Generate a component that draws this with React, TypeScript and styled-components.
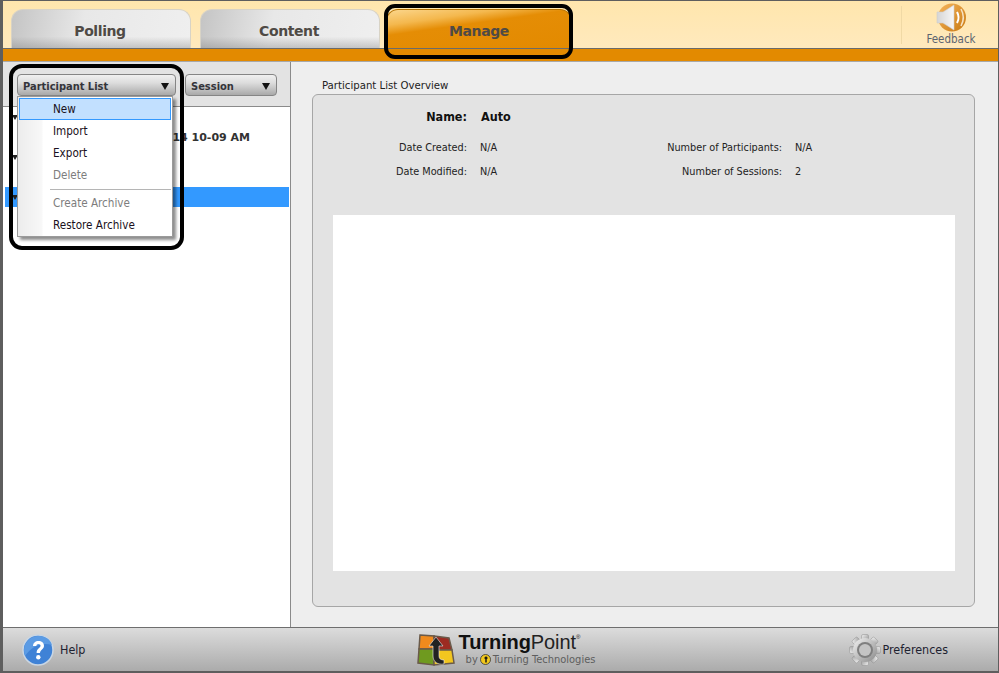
import React from 'react';
import styled, { createGlobalStyle } from 'styled-components';

const uiFont = `"DejaVu Sans Condensed", "Noto Sans", sans-serif`;

const GlobalStyle = createGlobalStyle`
  html, body {
    margin: 0;
    padding: 0;
    background: #fff;
  }
  body {
    font-family: ${uiFont};
    font-size: 11px;
    color: #1c1c1c;
  }
`;

const Window = styled.div`
  width: 999px;
  height: 673px;
  box-sizing: border-box;
  border: 1px solid #5e5e5e;
  border-width: 1px 1px 2px 3px;
  display: flex;
  flex-direction: column;
  overflow: hidden;
  position: relative;
`;

const Header = styled.header`
  height: 47px;
  flex: none;
  display: flex;
  align-items: flex-end;
  padding-left: 8px;
  background: linear-gradient(#ffe6ad, #ffe9bd);
  border-bottom: 1px solid #6b6b6b;
`;

const Tab = styled.div<{ $active?: boolean; $gap?: number }>`
  position: relative;
  width: ${p => (p.$active ? 186 : 180)}px;
  height: 39px;
  box-sizing: border-box;
  margin-right: ${p => p.$gap ?? 9}px;
  padding: 4px ${p => (p.$active ? 0 : 2)}px 0 0;
  display: flex;
  align-items: center;
  justify-content: center;
  border-radius: 12px 12px 0 0;
  border: 1px solid ${p => (p.$active ? '#b36f00' : '#d8d3c6')};
  border-bottom: 0;
  font-family: "DejaVu Sans", sans-serif;
  font-weight: 700;
  font-size: 14px;
  letter-spacing: -0.4px;
  color: #4f4a45;
  background: ${p =>
    p.$active
      ? 'linear-gradient(172deg, #fbd68c 0%, #f4b84e 24%, #e58d05 40%, #e38a00 100%)'
      : 'linear-gradient(180deg, transparent 70%, rgba(120,120,120,0.35) 100%), linear-gradient(100deg, #c4c4c4 0%, #e8e8e8 40%, #efefef 100%)'};
`;

const Callout = styled.div<{ $radius: number; $inset: string }>`
  position: absolute;
  inset: ${p => p.$inset};
  border: 4px solid #000;
  border-radius: ${p => p.$radius}px;
  pointer-events: none;
  z-index: 5;
`;

const FeedbackButton = styled.div`
  margin-left: auto;
  margin-right: 1px;
  margin-bottom: 4px;
  width: 96px;
  height: 38px;
  padding-left: 3px;
  box-sizing: border-box;
  border-left: 1px solid #f0d9a5;
  display: flex;
  flex-direction: column;
  align-items: center;
  color: #5c6470;
  font-size: 11.5px;
  line-height: 13px;

  svg {
    flex: none;
    margin-top: -3px;
    margin-bottom: 1px;
  }
`;

const OrangeBar = styled.div`
  height: 13px;
  flex: none;
  background: #e38a00;
  border-bottom: 1px solid #a8a8a8;
  box-sizing: border-box;
`;

const Main = styled.main`
  flex: 1;
  display: flex;
  min-height: 0;
`;

const LeftPane = styled.aside`
  width: 287px;
  flex: none;
  display: flex;
  flex-direction: column;
  border-right: 1px solid #8a8a8a;
  background: #fff;
`;

const Toolbar = styled.div`
  height: 45px;
  flex: none;
  box-sizing: border-box;
  padding: 12px 0 0 14px;
  display: flex;
  gap: 9px;
  align-items: flex-start;
  background: #e3e3e3;
  border-bottom: 1px solid #8a8a8a;
`;

const DropdownWrap = styled.div`
  position: relative;
`;

const DropdownButton = styled.div<{ $width: number }>`
  width: ${p => p.$width}px;
  height: 22px;
  box-sizing: border-box;
  padding: 2px 5px 0;
  display: flex;
  align-items: center;
  justify-content: space-between;
  border: 1px solid #858585;
  border-radius: 4px;
  background: linear-gradient(#f0f0f0, #dcdcdc 40%, #a9a9a9);
  font-family: ${uiFont};
  font-weight: 700;
  font-size: 11px;
  color: #34343a;
`;

const Caret = styled.span`
  width: 0;
  height: 0;
  border-left: 4px solid transparent;
  border-right: 4px solid transparent;
  border-top: 7px solid #111;
  margin-right: 1px;
`;

const Menu = styled.div`
  position: absolute;
  top: 22px;
  left: 0;
  width: 156px;
  height: 141px;
  box-sizing: border-box;
  padding: 1px;
  z-index: 4;
  background: linear-gradient(90deg, #ececec 0, #f8f8f8 24px, #fff 25px);
  border: 1px solid #9a9a9a;
  box-shadow: 3px 3px 3px rgba(0, 0, 0, 0.45);
`;

const MenuItem = styled.div<{ $highlight?: boolean; $disabled?: boolean }>`
  height: 22px;
  box-sizing: border-box;
  padding: 0 0 0 33px;
  display: flex;
  align-items: center;
  font-size: 11.6px;
  color: ${p => (p.$disabled ? '#7d7d7d' : '#1a1020')};
  background: ${p => (p.$highlight ? '#c2e0ff' : 'transparent')};
  border: 1px solid ${p => (p.$highlight ? '#3399ff' : 'transparent')};
`;

const MenuDivider = styled.div`
  height: 1px;
  margin: 3px 0 2px 31px;
  background: #b5b5b5;
`;

const TreeList = styled.div`
  flex: 1;
  padding: 0 1px 0 2px;
`;

const TreeRow = styled.div<{ $selected?: boolean }>`
  height: 20px;
  display: flex;
  align-items: center;
  padding-left: 7px;
  background: ${p => (p.$selected ? '#3399ff' : 'transparent')};
`;

const TreeArrow = styled.span`
  width: 0;
  height: 0;
  border-left: 3px solid transparent;
  border-right: 3px solid transparent;
  border-top: 5px solid #222;
`;

const TreeText = styled.span`
  margin-left: auto;
  margin-right: 39px;
  font-family: "DejaVu Sans", sans-serif;
  font-weight: 700;
  font-size: 11px;
  color: #333;
  white-space: nowrap;
`;

const RightPane = styled.section`
  flex: 1;
  background: #eeeeee;
  padding: 15px 23px 20px 21px;
  display: flex;
  flex-direction: column;
`;

const PaneTitle = styled.div`
  height: 17px;
  line-height: 18px;
  padding-left: 10px;
  font-size: 11.3px;
  color: #222;
`;

const GroupBox = styled.div`
  flex: 1;
  box-sizing: border-box;
  border: 1px solid #a6a6a6;
  border-radius: 6px;
  background: #e3e3e3;
  padding: 11px 19px 35px 20px;
  display: flex;
  flex-direction: column;
`;

const Details = styled.div`
  height: 109px;
  flex: none;
  display: grid;
  grid-template-columns: 134px 185px 130px 1fr;
  grid-template-rows: 29px 24px 24px;
  align-content: start;
  align-items: center;
`;

const NameLabel = styled.div`
  align-self: start;
  line-height: 21px;
  text-align: right;
  font-family: ${uiFont};
  font-weight: 700;
  font-size: 12.5px;
  color: #111;
`;

const NameValue = styled.div`
  align-self: start;
  line-height: 21px;
  padding-left: 14px;
  grid-column: 2 / 5;
  font-family: ${uiFont};
  font-weight: 700;
  font-size: 12.5px;
  color: #111;
`;

const InfoLabel = styled.div`
  text-align: right;
  white-space: nowrap;
  font-size: 10.8px;
  color: #222;
`;

const InfoValue = styled.div`
  padding-left: 13px;
  font-size: 10.8px;
  color: #222;
`;

const WhiteArea = styled.div`
  flex: 1;
  background: #fff;
`;

const Footer = styled.footer`
  height: 44px;
  flex: none;
  box-sizing: border-box;
  border-top: 1px solid #6e6e6e;
  display: grid;
  grid-template-columns: 1fr auto 1fr;
  align-items: center;
  padding: 0 50px 0 19px;
  background: linear-gradient(#dcdcdc, #ababab);
`;

const FooterItem = styled.div<{ $end?: boolean; $gap: number }>`
  display: flex;
  align-items: center;
  gap: ${p => p.$gap}px;
  font-size: 12.4px;
  color: #1e2230;
  justify-content: ${p => (p.$end ? 'flex-end' : 'flex-start')};
`;

const Brand = styled.div`
  display: flex;
  align-items: center;
  gap: 4px;
  padding-left: 42px;
`;

const BrandText = styled.div`
  display: flex;
  flex-direction: column;
  padding-bottom: 3px;
`;

const BrandName = styled.div`
  font-family: "Liberation Sans", sans-serif;
  font-size: 20px;
  line-height: 23px;
  height: 23px;
  color: #111;
  font-weight: 700;
  letter-spacing: -0.1px;

  span {
    font-weight: 400;
    color: #222;
  }

  sup {
    font-size: 6px;
    font-weight: 400;
    vertical-align: 10px;
    line-height: 0;
  }
`;

const BrandSub = styled.div`
  display: flex;
  align-items: center;
  gap: 2px;
  padding-left: 7px;
  font-size: 11px;
  line-height: 12px;
  height: 12px;
  color: #5e5e5e;
  white-space: nowrap;
`;

const SpeakerIcon = () => (
  <svg width="31" height="29" viewBox="0 0 31 29">
    <defs>
      <linearGradient id="spk" x1="0" y1="0" x2="1" y2="1">
        <stop offset="0" stopColor="#f6b55c" />
        <stop offset="1" stopColor="#c97a12" />
      </linearGradient>
      <linearGradient id="cone" x1="0" y1="0" x2="1" y2="0">
        <stop offset="0" stopColor="#d5d5d5" />
        <stop offset="1" stopColor="#f7f7f7" />
      </linearGradient>
    </defs>
    <circle cx="16" cy="14.500" r="14" fill="url(#spk)" />
    <path d="M1 9h6L18 2v25L7 20H1z" fill="url(#cone)" stroke="#cfcfcf" strokeWidth="0.600" />
    <path d="M21 9c2 3.500 2 7.500 0 11" fill="none" stroke="#fff" strokeWidth="2" />
    <path d="M25 6c3 5.500 3 11.500 0 17" fill="none" stroke="#f7e3c4" strokeWidth="1.500" />
  </svg>
);

const HelpIcon = () => (
  <svg width="32" height="32" viewBox="0 0 32 32">
    <circle cx="16" cy="16" r="15" fill="#3f82d6" stroke="#c9d6e4" strokeWidth="1.500" />
    <path d="M3 22C10 12 20 8 30 11 28 4 22 2 16 2 8 2 2 9 2 16c0 2 .4 4 1 6z" fill="#5b9be4" />
    <path
      d="M11 12c0-3 2.400-5 5.500-5 3.200 0 5.500 2 5.500 4.700 0 3.600-4 3.800-4 7.300h-3.400c0-4.800 3.900-5 3.900-7.200 0-1-.8-1.800-2-1.800-1.300 0-2.100.8-2.200 2z"
      fill="#fff"
    />
    <circle cx="16.300" cy="23.300" r="2.200" fill="#fff" />
  </svg>
);

const LogoIcon = () => (
  <svg width="38" height="34" viewBox="0 0 38 34">
    <path d="M3 2l14 1v13H2z" fill="#ef8a1d" stroke="#6a5a4a" strokeWidth="1.500" />
    <path d="M17 3l15 2 3 12H17z" fill="#9c2b22" stroke="#6a5a4a" strokeWidth="1.500" />
    <path d="M2 16h15v16L1 30z" fill="#6f9a1f" stroke="#6a5a4a" strokeWidth="1.500" />
    <path d="M17 17h18l2 13-20 2z" fill="#f2c61f" stroke="#6a5a4a" strokeWidth="1.500" />
    <path d="M19 4l7 9h-4v10c0 3 2 4 5 4v4c-6 1-11-2-11-8V13h-4z" fill="#222" stroke="#eee" strokeWidth="0.600" />
  </svg>
);

const TurningMark = () => (
  <svg width="11" height="11" viewBox="0 0 11 11">
    <circle cx="5.500" cy="5.500" r="5" fill="#f2c81c" stroke="#333" strokeWidth="0.800" />
    <path d="M6 2.500v6M4.500 4h3" stroke="#111" strokeWidth="1.400" fill="none" />
  </svg>
);

const GearIcon = () => {
  const teeth = [0, 45, 90, 135, 180, 225, 270, 315];
  return (
    <svg width="32" height="32" viewBox="0 0 32 32">
      <defs>
        <linearGradient id="gear" x1="0" y1="0" x2="1" y2="1">
          <stop offset="0" stopColor="#f2f2f2" />
          <stop offset="1" stopColor="#8a8a8a" />
        </linearGradient>
      </defs>
      {teeth.map(a => (
        <rect key={a} x="12.500" y="0.500" width="7" height="8" rx="1.500" fill="url(#gear)" stroke="#8f8f8f" strokeWidth="0.500" transform={`rotate(${a} 16 16)`} />
      ))}
      <circle cx="16" cy="16" r="12" fill="url(#gear)" />
      <circle cx="16" cy="16" r="8" fill="#7f7f7f" />
      <circle cx="16" cy="16" r="6" fill="#c4c4c4" />
    </svg>
  );
};

const App: React.FC = () => {
  return (
    <>
      <GlobalStyle />
      <Window>
        <Header>
          <Tab>Polling</Tab>
          <Tab $gap={6}>Content</Tab>
          <Tab $active>
            Manage
            <Callout $radius={11} $inset="-6px -2px -11px -3px" />
          </Tab>
          <FeedbackButton>
            <SpeakerIcon />
            <span>Feedback</span>
          </FeedbackButton>
        </Header>
        <OrangeBar />
        <Main>
          <LeftPane>
            <Toolbar>
              <DropdownWrap>
                <DropdownButton $width={159}>
                  Participant List
                  <Caret />
                </DropdownButton>
                <Menu>
                  <MenuItem $highlight>New</MenuItem>
                  <MenuItem>Import</MenuItem>
                  <MenuItem>Export</MenuItem>
                  <MenuItem $disabled>Delete</MenuItem>
                  <MenuDivider />
                  <MenuItem $disabled>Create Archive</MenuItem>
                  <MenuItem>Restore Archive</MenuItem>
                </Menu>
                <Callout $radius={13} $inset="-10px -8px -154px -8px" />
              </DropdownWrap>
              <DropdownButton $width={92}>
                Session
                <Caret />
              </DropdownButton>
            </Toolbar>
            <TreeList>
              <TreeRow>
                <TreeArrow />
              </TreeRow>
              <TreeRow>
                <TreeText>2014 10-09 AM</TreeText>
              </TreeRow>
              <TreeRow>
                <TreeArrow />
              </TreeRow>
              <TreeRow />
              <TreeRow $selected>
                <TreeArrow />
              </TreeRow>
            </TreeList>
          </LeftPane>
          <RightPane>
            <PaneTitle>Participant List Overview</PaneTitle>
            <GroupBox>
              <Details>
                <NameLabel>Name:</NameLabel>
                <NameValue>Auto</NameValue>
                <InfoLabel>Date Created:</InfoLabel>
                <InfoValue>N/A</InfoValue>
                <InfoLabel>Number of Participants:</InfoLabel>
                <InfoValue>N/A</InfoValue>
                <InfoLabel>Date Modified:</InfoLabel>
                <InfoValue>N/A</InfoValue>
                <InfoLabel>Number of Sessions:</InfoLabel>
                <InfoValue>2</InfoValue>
              </Details>
              <WhiteArea />
            </GroupBox>
          </RightPane>
        </Main>
        <Footer>
          <FooterItem $gap={6}>
            <HelpIcon />
            Help
          </FooterItem>
          <Brand>
            <LogoIcon />
            <BrandText>
              <BrandName>
                Turning<span>Point</span>
                <sup>®</sup>
              </BrandName>
              <BrandSub>
                by <TurningMark /> Turning Technologies
              </BrandSub>
            </BrandText>
          </Brand>
          <FooterItem $end $gap={2}>
            <GearIcon />
            Preferences
          </FooterItem>
        </Footer>
      </Window>
    </>
  );
};

export default App;
